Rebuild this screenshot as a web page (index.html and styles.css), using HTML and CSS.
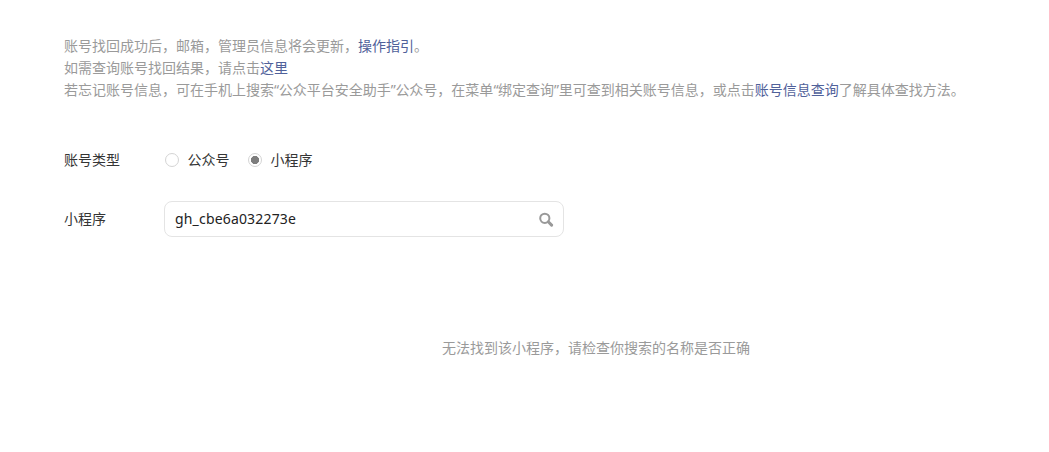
FILE: index.html
```
<!DOCTYPE html>
<html lang="zh-CN">
<head>
<meta charset="UTF-8">
<meta name="viewport" content="width=device-width, initial-scale=1.0">
<title>账号找回</title>
    <link rel="stylesheet" href="styles.css">
</head>
<body>
    <div class="container">
        <div class="tips">
            <p>账号找回成功后，邮箱，管理员信息将会更新，<a href="#">操作指引</a>。</p>
            <p>如需查询账号找回结果，请点击<a href="#">这里</a></p>
            <p>若忘记账号信息，可在手机上搜索<span class="quote">“</span>公众平台安全助手<span class="quote">”</span>公众号，在菜单<span class="quote">“</span>绑定查询<span class="quote">”</span>里可查到相关账号信息，或点击<a href="#">账号信息查询</a>了解具体查找方法。</p>
        </div>
        <form class="form">
            <!-- account type -->
            <div class="form-row">
                <span class="form-label">账号类型</span>
                <label class="radio"><input type="radio" name="type">公众号</label>
                <label class="radio"><input type="radio" name="type" checked>小程序</label>
            </div>
            <!-- search -->
            <div class="form-row">
                <label class="form-label" for="keyword">小程序</label>
                <div class="search">
                    <input id="keyword" type="text" value="gh_cbe6a032273e">
                    <svg class="search-icon" width="16" height="16" viewBox="0 0 16 16">
                        <circle cx="6.8" cy="7.3" r="4.6" fill="none" stroke="#999" stroke-width="2"/>
                        <path d="M10.3 10.8l3.3 3.3" stroke="#999" stroke-width="3" stroke-linecap="round"/>
                    </svg>
                </div>
            </div>
        </form>
        <p class="empty">无法找到该小程序，请检查你搜索的名称是否正确</p>
    </div>
</body>
</html>
```

FILE: styles.css
```
body{
    margin: 0;
    background-color: #ffffff;
    color: #353535;
    font-family: "Noto Sans", "Noto Sans CJK SC", sans-serif;
    font-size: 14px;
    line-height: 22px;
}
p{
    margin: 0;
}
a{
    color: #50619a;
    text-decoration: none;
}
.container{
    padding: 35px 0 0 64px;
}
.tips{
    color: #9a9a9a;
    white-space: nowrap;
}
.quote{
    letter-spacing: -0.35px;
}
.form{
    padding-top: 48px;
}
.form-row{
    display: flex;
    align-items: center;
}
.form-row + .form-row{
    margin-top: 30px;
}
.form-label{
    width: 100px;
}
.radio{
    display: flex;
    align-items: center;
    margin-right: 17.5px;
}
.radio input{
    appearance: none;
    width: 14px;
    height: 14px;
    margin: 0 8.5px 0 1px;
    border: 1px solid #d4d4d4;
    border-radius: 50%;
}
.radio input:checked{
    background: radial-gradient(circle, #7d7d7d 3.8px, #ffffff 4.4px);
}
.search{
    display: flex;
    align-items: center;
    box-sizing: border-box;
    width: 400px;
    height: 36px;
    padding: 0 9px 0 10px;
    border: 1px solid #e4e4e4;
    border-radius: 8px;
}
.search input{
    flex: 1;
    padding: 0;
    border: 0;
    outline: none;
    color: #222222;
    font: inherit;
    letter-spacing: 0.17px;
}
.empty{
    margin-top: 100px;
    padding-left: 378px;
    color: #9a9a9a;
}
```
